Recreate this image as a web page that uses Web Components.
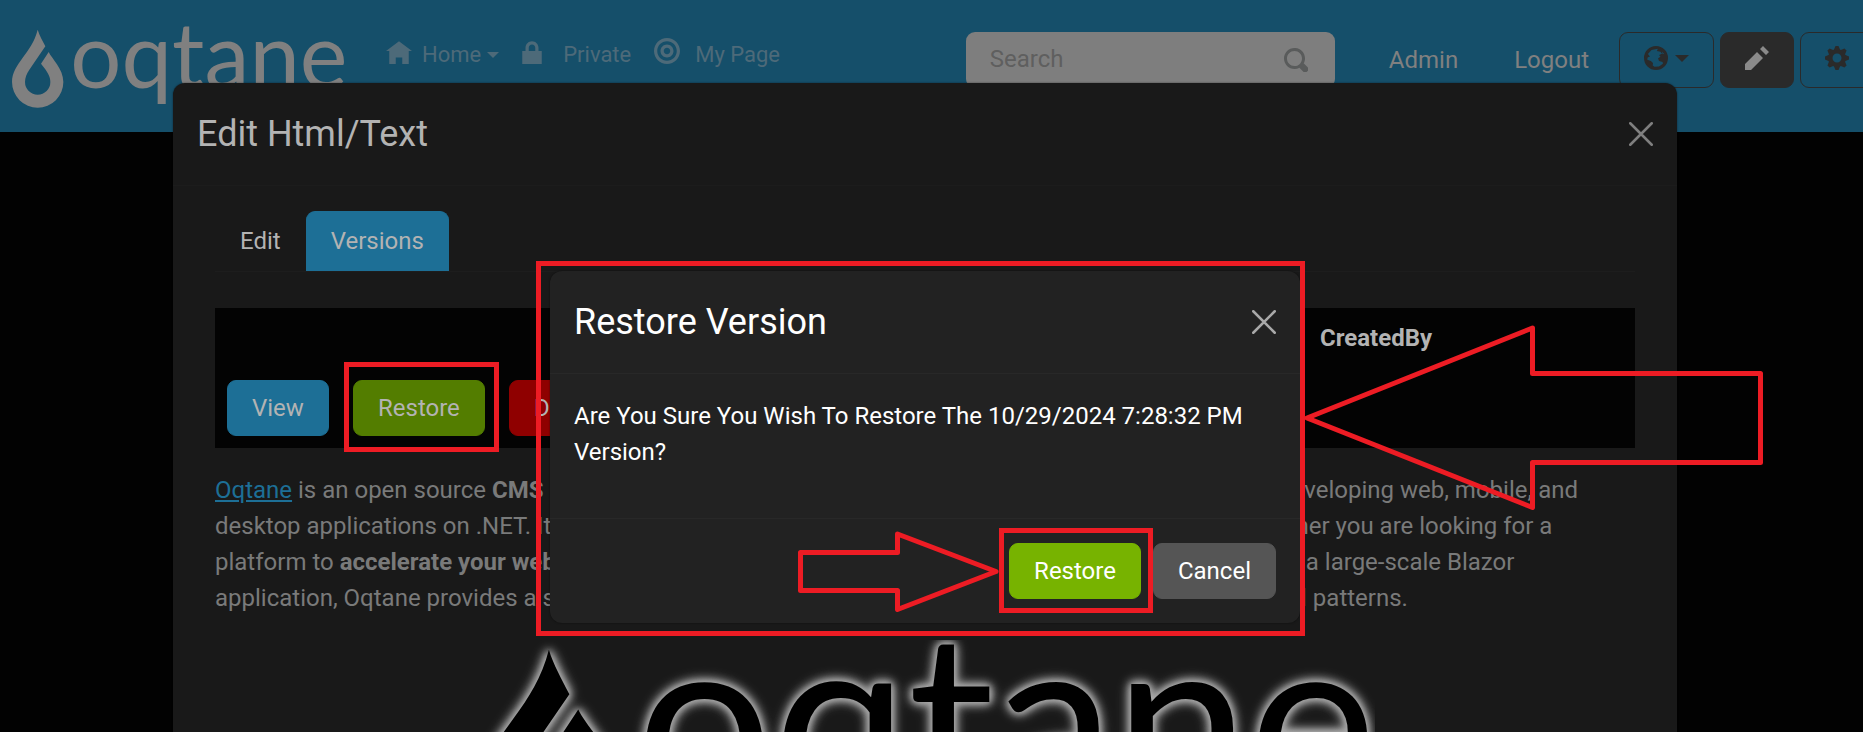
<!DOCTYPE html>
<html lang="en">
<head>
<meta charset="utf-8">
<meta name="viewport" content="width=device-width, initial-scale=1">
<title>Oqtane - Edit Html/Text</title>
<style>
  html, body { margin: 0; height: 100%; }
  body {
    background: #020202;
    color: #b3b3b3;
    font: 24px/36px Roboto, "Liberation Sans", sans-serif;
    position: relative;
    overflow: hidden;
  }
  a { color: #1d6f96; }
  .copy { margin: 24px 0; color: #797a7a; }
  .hero { display: flex; justify-content: center; }
  .hero oqtane-logo {
    width: 900px; color: #000; overflow: hidden;
    --glow: drop-shadow(0 0 3px #aaa) drop-shadow(0 0 5px #aaa) drop-shadow(0 0 4px #888);
  }
</style>
</head>
<body>
<site-header></site-header>

<modal-layer style="--top: 83px; --width: 1504px; --surface: #191919; --line: #1c1c1c; --close: #7f7f7f">
  <span slot="title">Edit Html/Text</span>
  <tab-panel>
    <versions-table></versions-table>
    <p class="copy"><a href="#oqtane">Oqtane</a> is an open source <b>CMS</b> and <b>Application Framework</b> that provides advanced functionality for developing web, mobile, and desktop applications on .NET. It leverages Blazor to compose a <b>fully dynamic</b> digital experience. Whether you are looking for a platform to <b>accelerate your web development</b> efforts, create reusable modules, or simply want to host a large-scale Blazor application, Oqtane provides a solid, well designed foundation based on proven enterprise architectural patterns.</p>
    <div class="hero"><oqtane-logo></oqtane-logo></div>
  </tab-panel>
</modal-layer>

<modal-layer compact style="--top: 271px; --width: 750px; --surface: #222; --line: #282828; --close: #a9a9a9; --ink: #fff">
  <span slot="title">Restore Version</span>
  <confirm-text>Are You Sure You Wish To Restore The 10/29/2024 7:28:32 PM Version?</confirm-text>
  <action-button slot="footer" style="--fill: #77b300; --ink: #fff">Restore</action-button>
  <action-button slot="footer" style="--fill: #555; --ink: #fff">Cancel</action-button>
</modal-layer>

<callout-marks></callout-marks>

<script>
const ICONS = {
  home: '<path transform="translate(0 1)" d="M4 0l-4 3h1v4h2v-2h2v2h2v-4h1l-4-3z"/>',
  lock: '<path transform="translate(0 1)" d="M4 0c-1.1 0-2 .9-2 2v1h-1v4h6v-4h-1v-1c0-1.1-.9-2-2-2zm0 1c.56 0 1 .44 1 1v1h-2v-1c0-.56.44-1 1-1z"/>',
  target: '<path d="M4 0c-2.2 0-4 1.8-4 4s1.8 4 4 4 4-1.8 4-4-1.8-4-4-4zm0 1c1.66 0 3 1.34 3 3s-1.34 3-3 3-3-1.34-3-3 1.34-3 3-3zm0 1c-1.1 0-2 .9-2 2s.9 2 2 2 2-.9 2-2-.9-2-2-2zm0 1c.56 0 1 .44 1 1s-.44 1-1 1-1-.44-1-1 .44-1 1-1z"/>',
  search: '<path d="M3.5 0c-1.93 0-3.5 1.57-3.5 3.5s1.57 3.5 3.5 3.5c.59 0 1.17-.14 1.66-.41a1 1 0 0 0 .13.13l1 1a1.02 1.02 0 1 0 1.44-1.44l-1-1a1 1 0 0 0-.16-.13c.27-.49.44-1.06.44-1.66 0-1.93-1.55-3.5-3.5-3.5zm0 1c1.39 0 2.5 1.11 2.5 2.5 0 .66-.24 1.27-.66 1.72-.01.01-.02.02-.03.03a1 1 0 0 0-.13.13c-.44.4-1.04.63-1.69.63-1.39 0-2.5-1.11-2.5-2.5s1.11-2.5 2.5-2.5z"/>',
  globe: '<path fill-rule="evenodd" d="M4 0a4 4 0 1 0 0 8a4 4 0 0 0 0-8zM2.500 1.300L4.600 .95L4.300 1.700L5.500 1.900L6 2.600L5 3L5.500 3.600L4.700 4.100L5 5L6.200 5.300L6.300 5.900L5 6.800L3.500 6.900L2.900 6.500L3 5.700L2.300 5L1.100 4.600L1.200 3.800L2 3.500L1.300 2.700ZM6 1.800L6.700 2.700L6.200 2.700Z"/>',
  pencil: '<path d="M6 0l-1 1 2 2 1-1-2-2zm-2 2l-4 4v2h2l4-4-2-2z"/>',
  cog: '<path d="M3.5 0l-.5 1.19c-.1.03-.19.08-.28.13l-1.19-.5-.72.72.5 1.19c-.05.1-.09.18-.13.28l-1.19.5v1l1.19.5c.04.1.08.18.13.28l-.5 1.19.72.72 1.19-.5c.09.04.18.09.28.13l.5 1.19h1l.5-1.19c.09-.04.19-.08.28-.13l1.19.5.72-.72-.5-1.19c.04-.09.09-.19.13-.28l1.19-.5v-1l-1.19-.5c-.03-.09-.08-.19-.13-.28l.5-1.19-.72-.72-1.19.5c-.09-.04-.19-.09-.28-.13l-.5-1.19h-1zm.5 2.5c.83 0 1.5.67 1.5 1.5s-.67 1.5-1.5 1.5-1.5-.67-1.5-1.5.67-1.5 1.5-1.5z"/>',
  close: '<path d="M.42.42l7.16 7.16M7.58.42l-7.16 7.16" fill="none" stroke="currentColor" stroke-width=".84" stroke-linecap="round"/>'
};

const define = (name, markup) => customElements.define(name, class extends HTMLElement {
  constructor() {
    super();
    this.attachShadow({ mode: 'open' }).innerHTML = markup;
  }
});

customElements.define('ui-icon', class extends HTMLElement {
  connectedCallback() {
    if (this.shadowRoot) return;
    this.attachShadow({ mode: 'open' }).innerHTML = `
      <style>
        :host { display: block; flex: none; width: var(--size, 24px); height: var(--size, 24px); }
        svg { display: block; width: 100%; height: 100%; fill: currentColor; }
      </style>
      <svg viewBox="0 0 8 8" aria-hidden="true">${ICONS[this.getAttribute('name')]}</svg>`;
  }
});

define('oqtane-logo', `
  <style>
    :host { display: block; }
    svg { display: block; width: 100%; fill: currentColor; filter: var(--glow, none); overflow: visible; }
    text { font-family: Lato, sans-serif; font-size: 271px; }
  </style>
  <svg viewBox="30 77 1011 260">
    <path d="M113 88C118 105 128 122 136 138L88 208C80 220 75 232 75 245A38 38 0 0 0 151 245C151 228 143 215 123 190L146 155C155 175 190 205 190 245A77 77 0 0 1 36 245C36 190 95 160 113 88Z"/>
    <text x="211" y="264">oqtane</text>
  </svg>`);

define('action-button', `
  <style>
    :host { display: inline-block; vertical-align: top; }
    button {
      display: block; margin: 0; padding: 9px 24px; border: 1px solid var(--fill); border-radius: 9px;
      background: var(--fill); color: var(--ink, #b3b3b3); font: inherit; cursor: pointer;
    }
  </style>
  <button type="button"><slot></slot></button>`);

define('confirm-text', `
  <style>
    :host { display: block; }
    p { margin: 0 0 24px; }
  </style>
  <p><slot></slot></p>`);

define('site-header', `
  <style>
    :host { display: block; }
    header {
      display: flex; align-items: flex-start; box-sizing: border-box; height: 132px;
      padding: 0 0 0 10px; background: #154f6a; color: #808080; overflow: hidden;
    }
    oqtane-logo { flex: none; width: 337px; margin-top: 26px; }
    nav { display: flex; flex: none; margin: 37px 0 0 39px; font-size: 22px; }
    nav a, .tools a { color: inherit; text-decoration: none; }
    nav a { display: flex; color: #4d6a79; --size: 26px; }
    nav ui-icon { margin-top: 1px; }
    .home { gap: 10px; margin-right: 20px; }
    .private { gap: 18px; margin-right: 23px; }
    .mine { gap: 15px; }
    .caret { align-self: center; margin-left: 7px; border: 6px solid transparent; border-top-color: currentColor; border-bottom: 0; }
    .home .caret { margin-left: -4px; }
    .tools { display: flex; align-items: flex-start; margin: 32px -11px 0 auto; }
    .tools a { line-height: 56px; }
    .search {
      display: flex; align-items: flex-start; box-sizing: border-box; width: 369px; height: 56px;
      padding: 0 27px 0 24px; margin-right: 54px; border-radius: 9px; background: #7e7e7e; color: #595b5b;
    }
    .search ui-icon { margin-top: 16px; }
    input {
      flex: 1; min-width: 0; height: 54px; padding: 0; border: 0; outline: 0; background: none;
      color: inherit; font: inherit;
    }
    input::placeholder { color: #5f5f5f; opacity: 1; }
    .admin { margin-right: 56px; }
    .logout { margin-right: 24px; }
    button {
      display: flex; flex: none; box-sizing: border-box; height: 56px; margin: 0 0 0 6px; padding: 13px 24px 0;
      border: 1px solid #2a2a2a; border-radius: 9px; background: none; color: #2a2a2a; font: inherit;
    }
    button .caret { align-self: flex-start; margin-top: 9px; border-width: 7px 7px 0; }
    .solid { background: #2a2a2a; color: #8a8a8a; }
  </style>
  <header>
    <oqtane-logo></oqtane-logo>
    <nav>
      <a class="home" href="#home"><ui-icon name="home"></ui-icon>Home<span class="caret"></span></a>
      <a class="private" href="#private"><ui-icon name="lock"></ui-icon>Private</a>
      <a class="mine" href="#mypage"><ui-icon name="target"></ui-icon>My Page</a>
    </nav>
    <div class="tools">
      <div class="search"><input type="text" placeholder="Search" aria-label="Search"><ui-icon name="search"></ui-icon></div>
      <a class="admin" href="#admin">Admin</a>
      <a class="logout" href="#logout">Logout</a>
      <button type="button" aria-label="Language"><ui-icon name="globe"></ui-icon><span class="caret"></span></button>
      <button type="button" class="solid" aria-label="Edit page"><ui-icon name="pencil"></ui-icon></button>
      <button type="button" aria-label="Settings"><ui-icon name="cog"></ui-icon></button>
    </div>
  </header>`);

define('modal-layer', `
  <style>
    :host { position: absolute; inset: 0 13px auto 0; display: flex; justify-content: center; padding: var(--top) 24px 0; }
    section {
      width: 100%; max-width: var(--width); border-radius: 12px; background: var(--surface);
      color: var(--ink, #b3b3b3); box-shadow: 0 0 2px #0008;
    }
    header { display: flex; align-items: center; justify-content: space-between; padding: 24px; border-bottom: 1px solid var(--line); }
    h5 { margin: 0; font-size: 36px; line-height: 54px; font-weight: 400; }
    header button { padding: 0; border: 0; background: none; color: var(--close); }
    .body { padding: 25px 42px; }
    :host([compact]) .body { padding: 24px; }
    footer { display: none; justify-content: flex-end; gap: 12px; padding: 24px; border-top: 1px solid var(--line); }
    :host([compact]) footer { display: flex; }
  </style>
  <section role="dialog">
    <header><h5><slot name="title"></slot></h5><button type="button" aria-label="Close"><ui-icon name="close"></ui-icon></button></header>
    <div class="body"><slot></slot></div>
    <footer><slot name="footer"></slot></footer>
  </section>`);

define('tab-panel', `
  <style>
    :host { display: block; }
    nav { display: flex; margin-bottom: 36px; border-bottom: 1px solid #1d1d1d; }
    button {
      padding: 11px 24px 12px; border: 1px solid transparent; border-bottom: 0; border-radius: 9px 9px 0 0;
      background: none; color: #b3b3b3; font: inherit;
    }
    .active { background: #1d6f96; border-color: #1d6f96; }
  </style>
  <nav role="tablist">
    <button type="button" role="tab">Edit</button>
    <button type="button" role="tab" class="active" aria-selected="true">Versions</button>
  </nav>
  <slot></slot>`);

define('versions-table', `
  <style>
    :host { display: block; }
    table { width: 100%; table-layout: fixed; border-collapse: collapse; background: #030303; }
    th, td { padding: 12px; text-align: left; vertical-align: top; }
    th { font-weight: 700; }
    .view { width: 102px; }
    .restore { width: 132px; }
    .by { width: 303px; }
  </style>
  <table>
    <thead><tr><th class="view"></th><th class="restore"></th><th></th><th class="by">CreatedBy</th></tr></thead>
    <tbody><tr>
      <td><action-button style="--fill: #1d6f96">View</action-button></td>
      <td><action-button style="--fill: #537d00">Restore</action-button></td>
      <td><action-button style="--fill: #8f0000">Delete</action-button></td>
      <td></td>
    </tr></tbody>
  </table>`);

define('callout-marks', `
  <style>
    :host { position: absolute; inset: 0; pointer-events: none; }
    svg { display: block; width: 1863px; height: 732px; fill: none; stroke: #ed1c24; stroke-width: 5; stroke-linejoin: round; }
  </style>
  <svg aria-hidden="true">
    <g stroke-linejoin="miter">
      <path d="M346.500 364.500h150v85h-150z"/>
      <path d="M538.500 263.500h764v370h-764z"/>
      <path d="M1001.500 530.500h149v80h-149z"/>
    </g>
    <path d="M800.500 552.500H897.500V534L996 571.500L897.500 609.500V590.500H800.500Z"/>
    <path d="M1760.500 373.500H1532.500V328L1307 418L1532.500 507.500V462.500H1760.500Z"/>
  </svg>`);
</script>
</body>
</html>
